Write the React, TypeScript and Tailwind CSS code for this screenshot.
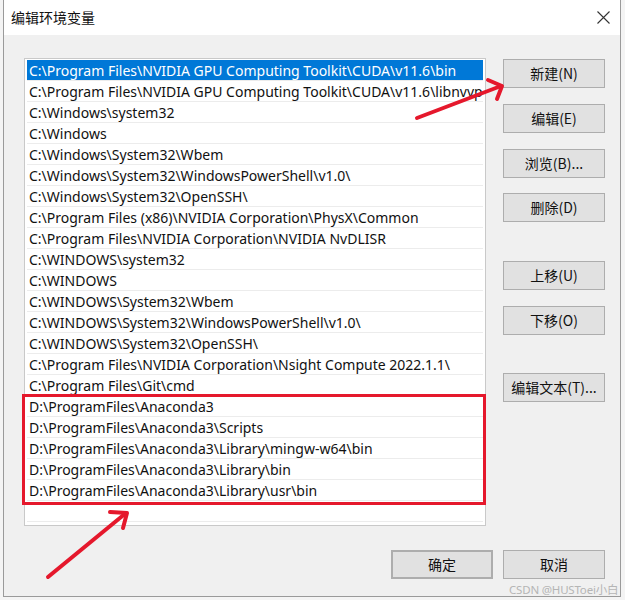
import React from 'react';

const paths = [
  "C:\\Program Files\\NVIDIA GPU Computing Toolkit\\CUDA\\v11.6\\bin",
  "C:\\Program Files\\NVIDIA GPU Computing Toolkit\\CUDA\\v11.6\\libnvvp",
  "C:\\Windows\\system32",
  "C:\\Windows",
  "C:\\Windows\\System32\\Wbem",
  "C:\\Windows\\System32\\WindowsPowerShell\\v1.0\\",
  "C:\\Windows\\System32\\OpenSSH\\",
  "C:\\Program Files (x86)\\NVIDIA Corporation\\PhysX\\Common",
  "C:\\Program Files\\NVIDIA Corporation\\NVIDIA NvDLISR",
  "C:\\WINDOWS\\system32",
  "C:\\WINDOWS",
  "C:\\WINDOWS\\System32\\Wbem",
  "C:\\WINDOWS\\System32\\WindowsPowerShell\\v1.0\\",
  "C:\\WINDOWS\\System32\\OpenSSH\\",
  "C:\\Program Files\\NVIDIA Corporation\\Nsight Compute 2022.1.1\\",
  "C:\\Program Files\\Git\\cmd",
];

const anaconda = [
  "D:\\ProgramFiles\\Anaconda3",
  "D:\\ProgramFiles\\Anaconda3\\Scripts",
  "D:\\ProgramFiles\\Anaconda3\\Library\\mingw-w64\\bin",
  "D:\\ProgramFiles\\Anaconda3\\Library\\bin",
  "D:\\ProgramFiles\\Anaconda3\\Library\\usr\\bin",
];

const font = { fontFamily: '"Noto Sans", "Noto Sans CJK SC", sans-serif' };

const Row = ({ text, selected }: { text: string; selected?: boolean }) => (
  <div
    className={
      'h-[21px] pl-[2px] flex items-center text-[14px] whitespace-nowrap overflow-hidden border-b border-[#ececec] ' +
      (selected ? 'bg-[#0078d7] text-white' : 'text-[#111]')
    }
  >
    {text}
  </div>
);

const Btn = ({ label, className = '' }: { label: string; className?: string }) => (
  <div
    className={
      'w-[102px] h-[29px] flex items-center justify-center bg-[#e1e1e1] border border-[#adadad] text-[14px] text-[#111] ' +
      className
    }
  >
    {label}
  </div>
);

export default function App() {
  return (
    <div className="relative w-[625px] h-[600px] bg-[#f4f4f4] overflow-hidden" style={font}>
      <div className="ml-[3px] w-[618px] h-[597px] bg-[#f0f0f0] border-l border-r border-b border-[#9a9a9a] flex flex-col">
        <div className="h-[35px] bg-white flex items-center justify-between pl-[7px] pr-[10px]">
          <span className="text-[14px] text-[#111] font-['Noto_Sans_CJK_SC']">编辑环境变量</span>
          <svg width="13" height="13" viewBox="0 0 13 13">
            <path d="M0.5 0.5 L12.5 12.5 M12.5 0.5 L0.5 12.5" stroke="#333" strokeWidth="1.1" />
          </svg>
        </div>
        <div className="flex pl-[20px] pt-[23px]">
          <div className="w-[462px] h-[468px] bg-white border border-[#c9c9c9] pt-[1px] px-[2px]">
            <Row text={paths[0]} selected />
            {paths.slice(1).map((p, i) => (
              <Row key={i} text={p} />
            ))}
            {anaconda.map((p, i) => (
              <Row key={'a' + i} text={p} />
            ))}
            <Row text="" />
          </div>
          <div className="ml-[17px] flex flex-col font-['Noto_Sans_CJK_SC']">
            <Btn label="新建(N)" className="mt-[1px]" />
            <Btn label="编辑(E)" className="mt-[16px]" />
            <Btn label="浏览(B)..." className="mt-[16px]" />
            <Btn label="删除(D)" className="mt-[15px]" />
            <Btn label="上移(U)" className="mt-[39px]" />
            <Btn label="下移(O)" className="mt-[16px]" />
            <Btn label="编辑文本(T)..." className="mt-[38px]" />
          </div>
        </div>
        <div className="flex justify-end gap-[10px] pr-[15px] mt-[24px] font-['Noto_Sans_CJK_SC']">
          <Btn label="确定" className="w-[101px] border-2 border-[#0078d7]" />
          <Btn label="取消" />
        </div>
      </div>

      {/* red highlight box */}
      <div className="absolute left-[22px] top-[394px] w-[464px] h-[111px] border-[3px] border-[#e5182c]" />

      {/* arrows */}
      <svg className="absolute left-0 top-0" width="625" height="600" viewBox="0 0 625 600">
        <g stroke="#e5182c" strokeWidth="4" strokeLinecap="round" strokeLinejoin="round" fill="none">
          <path d="M417 118 L501 86" />
          <path d="M488 80 L502 86 L497 99" />
          <path d="M48 577 L126 513" />
          <path d="M110 512 L127 513 L123 528" />
        </g>
      </svg>

      <div className="absolute left-[509px] top-[581px] text-[11.5px] tracking-[-0.2px] text-[#b5b5b5] whitespace-nowrap">
        CSDN @HUSToei小白
      </div>
    </div>
  );
}
